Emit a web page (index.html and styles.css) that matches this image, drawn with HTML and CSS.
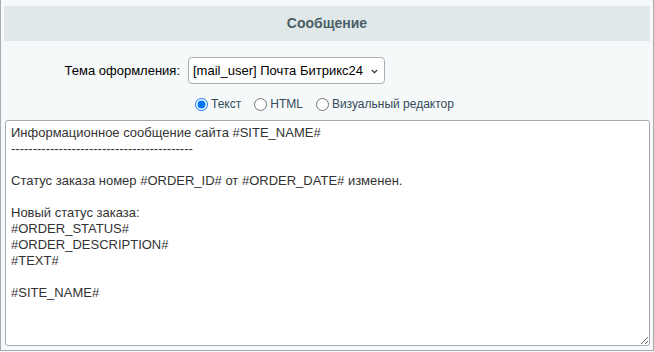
FILE: index.html
```html
<!DOCTYPE html>
<html lang="ru">
  <head>
    <meta charset="UTF-8" />
    <title>Сообщение</title>
    <link rel="stylesheet" href="styles.css">
  </head>
  <body>
    <div class="panel">
      <h2 class="panel-title">Сообщение</h2>

      <div class="field-row">
        <label class="field-label" for="theme_select">Тема оформления:</label>
        <div class="select-wrap">
          <select class="field-select" id="theme_select">
            <option>[mail_user] Почта Битрикс24</option>
          </select>
          <svg class="select-arrow" width="7" height="5" viewBox="0 0 7 5">
            <path d="M0.8 1l2.7 2.7 2.7-2.7" fill="none" stroke="#333" stroke-width="1.2" />
          </svg>
        </div>
      </div>

      <div class="type-row">
        <label class="type-option">
          <input type="radio" name="body_type" value="text" checked />Текст
        </label>
        <label class="type-option">
          <input type="radio" name="body_type" value="html" />HTML
        </label>
        <label class="type-option">
          <input type="radio" name="body_type" value="editor" />Визуальный редактор
        </label>
      </div>

      <textarea class="message-body">Информационное сообщение сайта #SITE_NAME#
------------------------------------------

Статус заказа номер #ORDER_ID# от #ORDER_DATE# изменен.

Новый статус заказа:
#ORDER_STATUS#
#ORDER_DESCRIPTION#
#TEXT#

#SITE_NAME#</textarea>
    </div>
  </body>
</html>
```

FILE: styles.css
```css
* {
  margin: 0;
  padding: 0;
  box-sizing: border-box;
}
body {
  font-family: "Liberation Sans", Arial, sans-serif;
  font-size: 13px;
  background-color: #f5f9f9;
  width: 654px;
  height: 352px;
}
.panel {
  height: 351px;
  padding: 6px 3px 0;
  border: 1px solid #a8acae;
  border-top: none;
  background-color: #f5f9f9;
}
.panel-title {
  height: 35px;
  line-height: 35px;
  background-color: #e0e8ea;
  color: #4b5e66;
  font-size: 14px;
  font-weight: bold;
  text-align: center;
}
.field-row {
  display: flex;
  align-items: center;
  gap: 8px;
  margin-top: 16px;
  height: 27px;
}
.field-label {
  width: 176px;
  text-align: right;
  color: #000;
}
.select-wrap {
  position: relative;
}
.field-select {
  appearance: none;
  -webkit-appearance: none;
  width: 197px;
  height: 27px;
  padding: 0 20px 0 4px;
  border: 1px solid #a9b0b4;
  border-radius: 4px;
  background: #fff;
  font-family: inherit;
  font-size: 13px;
  color: #000;
  outline: none;
}
.select-arrow {
  position: absolute;
  right: 7px;
  top: 12px;
  pointer-events: none;
}
.type-row {
  display: flex;
  align-items: center;
  gap: 13px;
  height: 20px;
  margin-top: 10px;
  padding-left: 191px;
  font-size: 12px;
  color: #34495a;
}
.type-option {
  display: flex;
  align-items: center;
  cursor: pointer;
}
.type-option input {
  width: 13px;
  height: 13px;
  margin: 0 3px 0 0;
}
.message-body {
  display: block;
  width: 645px;
  height: 226px;
  margin: 6px 0 0 1px;
  padding: 4px 5px;
  border: 1px solid #a3abb0;
  border-radius: 3px;
  background: #fff;
  font-family: "Liberation Sans", Arial, sans-serif;
  font-size: 13px;
  line-height: 16px;
  color: #333;
  resize: both;
  outline: none;
}
```
